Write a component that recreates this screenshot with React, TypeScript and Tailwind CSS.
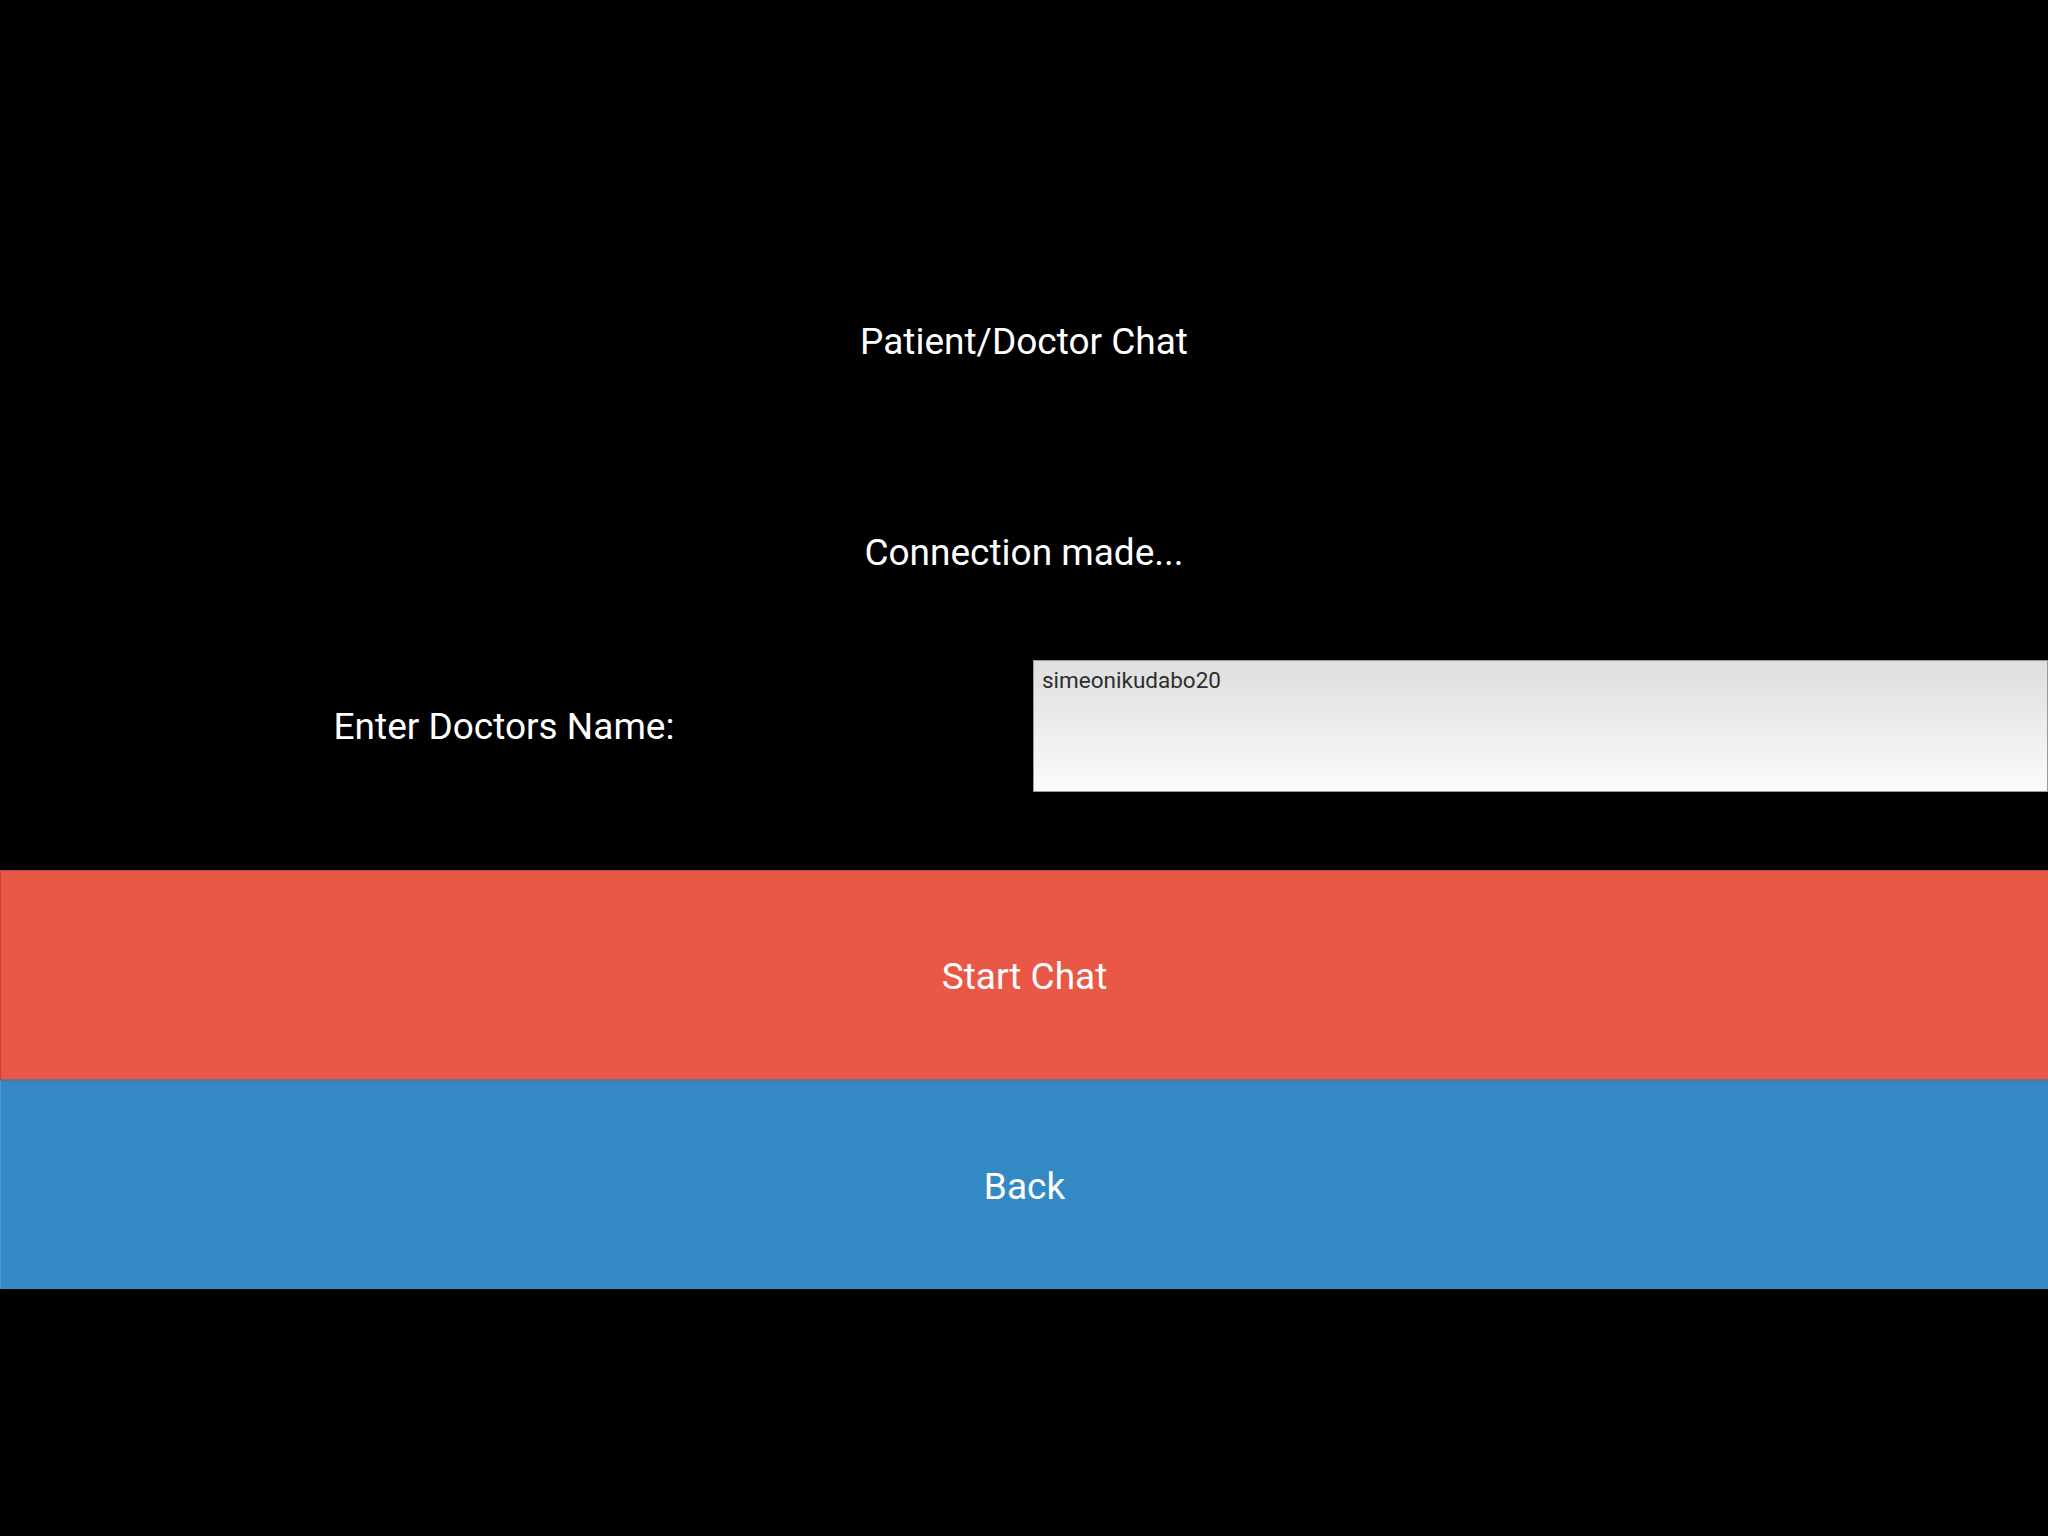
import React from "react";

export default function App() {
  return (
    <div
      className="w-[2048px] h-[1536px] bg-black flex flex-col text-white overflow-hidden"
      style={{ fontFamily: "Roboto, 'Noto Sans', sans-serif" }}
    >
      <div className="h-[236px] shrink-0" />
      <div className="h-[210px] shrink-0 flex items-center justify-center text-[37px] leading-none">
        Patient/Doctor Chat
      </div>
      <div className="h-[212px] shrink-0 flex items-center justify-center text-[37px] leading-none">
        Connection made...
      </div>
      <div className="h-[212px] shrink-0 flex items-start pt-[2px]">
        <div className="w-[1008px] h-[132px] flex items-center justify-center text-[37px] leading-none">
          Enter Doctors Name:
        </div>
        <div className="ml-[25px] flex-1 h-[132px] border border-[#9a9a9a] bg-gradient-to-b from-[#dedede] to-[#fbfbfb] px-[8px] pt-[3px] text-[22.5px] leading-normal text-[#2e2e2e]">
          simeonikudabo20
        </div>
      </div>
      <div className="h-[211px] shrink-0 bg-[#e95847] border-t border-l border-[#c0463a] border-b-2 border-b-[#6e6e86] flex items-center justify-center text-[37px] leading-none pt-[2px]">
        Start Chat
      </div>
      <div className="h-[208px] shrink-0 bg-[#3389c3] border-l border-[#3e9fdc] flex items-center justify-center text-[37px] leading-none pt-[2px]">
        Back
      </div>
    </div>
  );
}
